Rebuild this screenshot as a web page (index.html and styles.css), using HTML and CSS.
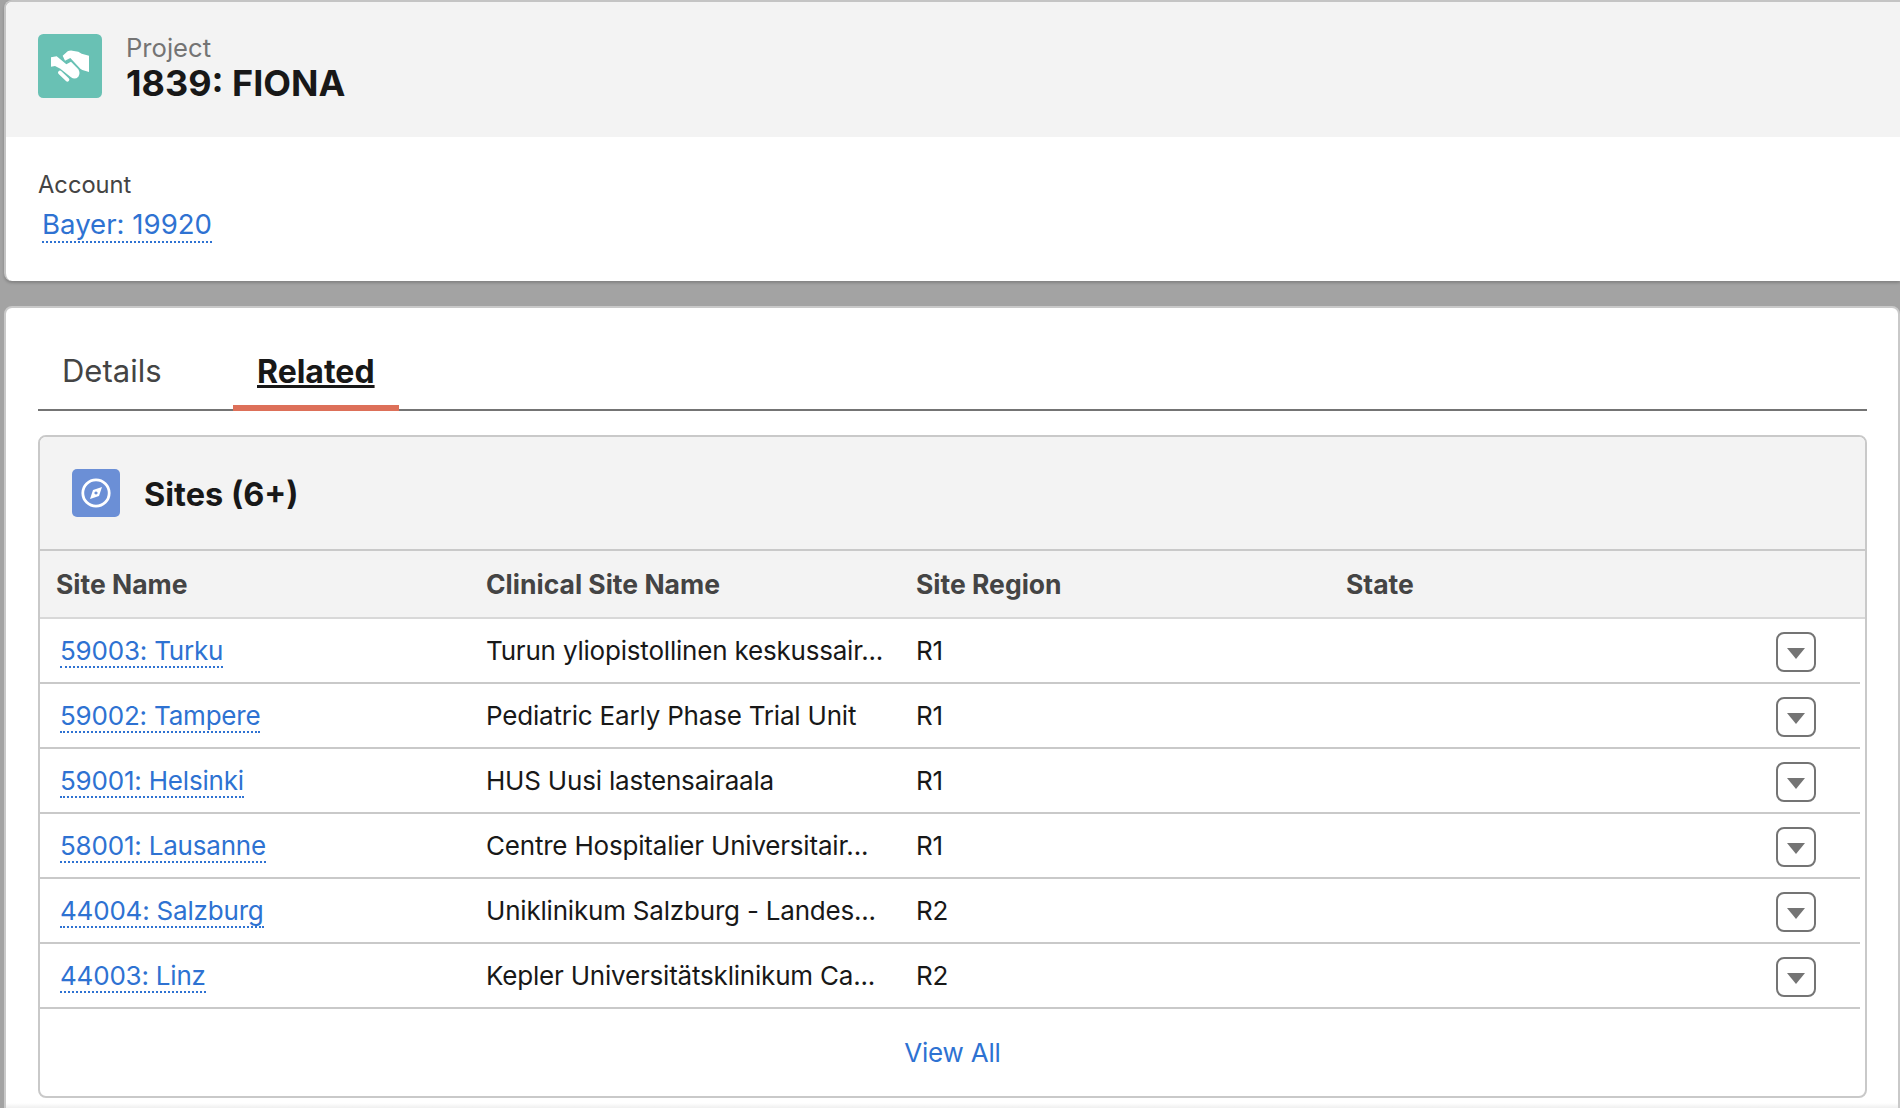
FILE: index.html
```html
<!DOCTYPE html>
<html lang="en">
<head>
    <meta charset="UTF-8">
    <meta name="viewport" content="width=device-width, initial-scale=1.0">
    <title>1839: FIONA</title>
    <link rel="stylesheet" href="styles.css">
</head>
<body>
    <section class="highlights">
        <header class="record-head">
            <svg class="record-icon" viewBox="39 42 192 192" aria-hidden="true">
                <rect x="39" y="42" width="192" height="192" rx="16" fill="#69c1b4"/>
                <path fill="#fff" d="M113 107 L128 94 Q134 91 142 92 L160 95 L170 101 L192 107 V156 L172 150 L166 146 L136 114 L120 122 Z"/>
                <path fill="#fff" d="M78 112 L95 109 L124 133 L138 125 L160 148 Q167 160 160 170 Q150 180 138 172 L106 146 L90 138 L78 140 Z"/>
                <path stroke="#fff" stroke-width="12" stroke-linecap="round" d="M105 158 L127 179"/>
            </svg>
            <div>
                <div class="record-type">Project</div>
                <h1 class="record-name">1839: FIONA</h1>
            </div>
        </header>
        <div class="record-fields">
            <div class="field-label">Account</div>
            <a class="link account-link" href="#">Bayer: 19920</a>
        </div>
    </section>

    <section class="main-card">
        <nav class="tabs">
            <a class="tab" href="#">Details</a>
            <a class="tab tab-active" href="#">Related</a>
        </nav>

        <div class="related-card">
            <div class="related-head">
                <svg class="related-icon" viewBox="0 0 48 48" aria-hidden="true">
                    <rect width="48" height="48" rx="5" fill="#6b8fd6"/>
                    <circle cx="24" cy="24" r="13.2" fill="none" stroke="#fff" stroke-width="2.8"/>
                    <path fill="#fff" fill-rule="evenodd" d="M18 30 L21 21 L30 18 L27 27 Z M24 22.4 a1.6 1.6 0 1 0 0.01 0 Z"/>
                </svg>
                <h2 class="related-title">Sites (6+)</h2>
            </div>

            <div class="grid-row grid-header">
                <div class="col-first">Site Name</div>
                <div>Clinical Site Name</div>
                <div>Site Region</div>
                <div>State</div>
            </div>

            <div class="grid-row">
                <div class="col-link"><a class="link" href="#">59003: Turku</a></div>
                <div>Turun yliopistollinen keskussair...</div>
                <div>R1</div>
                <div></div>
                <button class="row-action"></button>
            </div>
            <div class="grid-row">
                <div class="col-link"><a class="link" href="#">59002: Tampere</a></div>
                <div>Pediatric Early Phase Trial Unit</div>
                <div>R1</div>
                <div></div>
                <button class="row-action"></button>
            </div>
            <div class="grid-row">
                <div class="col-link"><a class="link" href="#">59001: Helsinki</a></div>
                <div>HUS Uusi lastensairaala</div>
                <div>R1</div>
                <div></div>
                <button class="row-action"></button>
            </div>
            <div class="grid-row">
                <div class="col-link"><a class="link" href="#">58001: Lausanne</a></div>
                <div>Centre Hospitalier Universitair...</div>
                <div>R1</div>
                <div></div>
                <button class="row-action"></button>
            </div>
            <div class="grid-row">
                <div class="col-link"><a class="link" href="#">44004: Salzburg</a></div>
                <div>Uniklinikum Salzburg - Landes...</div>
                <div>R2</div>
                <div></div>
                <button class="row-action"></button>
            </div>
            <div class="grid-row">
                <div class="col-link"><a class="link" href="#">44003: Linz</a></div>
                <div>Kepler Universitätsklinikum Ca...</div>
                <div>R2</div>
                <div></div>
                <button class="row-action"></button>
            </div>

            <div class="related-foot"><a class="view-all" href="#">View All</a></div>
        </div>
    </section>
</body>
</html>
```

FILE: styles.css
```css
* {
    box-sizing: border-box;
}

html, body {
    height: 100%;
}

body {
    margin: 0;
    padding-left: 4px;
    background-color: #a3a3a3;
    font-family: Inter, "Liberation Sans", sans-serif;
    color: #181818;
    overflow: hidden;
}

a {
    text-decoration: none;
}

.link {
    color: #2e72d2;
    border-bottom: 2px dotted #2e72d2;
}

/* top record card */
.highlights {
    height: 281px;
    background-color: white;
    border-top: 2px solid #c4c4c4;
    border-left: 2px solid #c4c4c4;
    border-radius: 8px 0 0 8px;
    box-shadow: 0 2px 3px rgba(0, 0, 0, 0.2);
    overflow: hidden;
}

.record-head {
    display: flex;
    align-items: flex-start;
    gap: 24px;
    height: 135px;
    padding: 32px 0 0 32px;
    background-color: #f3f3f3;
}

.record-icon {
    width: 64px;
    height: 64px;
}

.record-type {
    font-size: 25.6px;
    line-height: 28px;
    color: #747474;
}

.record-name {
    margin: 1px 0 0;
    font-size: 36px;
    line-height: 40px;
    font-weight: 700;
}

.record-fields {
    padding: 33px 0 0 32px;
}

.field-label {
    font-size: 23.7px;
    line-height: 30px;
    color: #444;
}

.account-link {
    display: inline-block;
    margin: 7px 0 0 4px;
    font-size: 27.6px;
    line-height: 34px;
}

/* tabs + related list */
.main-card {
    height: 820px;
    margin-top: 25px;
    padding: 0 31px 0 32px;
    background: linear-gradient(#fff 795px, #ececec 801px);
    border: 2px solid #c9c9c9;
    border-radius: 8px;
}

.tabs {
    display: flex;
    height: 103px;
    padding-top: 44px;
    border-bottom: 2px solid #747474;
}

.tab {
    width: 195px;
    height: 57px;
    padding-left: 24px;
    font-size: 31px;
    line-height: 38px;
    color: #444;
}

.tab-active {
    width: 166px;
    margin-bottom: -2px;
    height: 59px;
    padding-top: 1px;
    font-size: 32px;
    font-weight: 700;
    color: #181818;
    text-decoration: underline;
    border-bottom: 6px solid #dd7059;
}

.related-card {
    height: 663px;
    margin-top: 24px;
    background-color: white;
    border: 2px solid #c9c9c9;
    border-radius: 8px;
    overflow: hidden;
}

.related-head {
    display: flex;
    align-items: center;
    gap: 24px;
    height: 114px;
    padding-left: 32px;
    background-color: #f3f3f3;
    border-bottom: 2px solid #c9c9c9;
}

.related-icon {
    width: 48px;
    height: 48px;
}

.related-title {
    margin: 2px 0 0;
    font-size: 32.5px;
    font-weight: 700;
}

.grid-row {
    display: grid;
    grid-template-columns: 446px 430px 430px 1fr 100px;
    align-items: center;
    height: 65px;
    margin-right: 5px;
    font-size: 26px;
    letter-spacing: -0.2px;
    background-color: white;
    border-bottom: 2px solid #c9c9c9;
}

.grid-header {
    height: 68px;
    margin-right: 0;
    font-size: 26.5px;
    font-weight: 700;
    letter-spacing: 0;
    color: #444;
    background-color: #f3f3f3;
    border-bottom-color: #d8d8d8;
}

.col-first {
    padding-left: 16px;
}

.col-link {
    padding-left: 20px;
}

.row-action {
    width: 40px;
    height: 40px;
    margin: 3px 0 0 16px;
    padding: 0;
    background-color: white;
    border: 2px solid #747474;
    border-radius: 8px;
    position: relative;
}

/* the down arrow inside the row button */
.row-action::after {
    content: "";
    position: absolute;
    left: 9px;
    top: 14px;
    border-top: 11px solid #747474;
    border-left: 9px solid transparent;
    border-right: 9px solid transparent;
}

.related-foot {
    display: flex;
    justify-content: center;
    padding-top: 28px;
    font-size: 26px;
    letter-spacing: -0.2px;
}

.view-all {
    color: #2e72d2;
}
```
